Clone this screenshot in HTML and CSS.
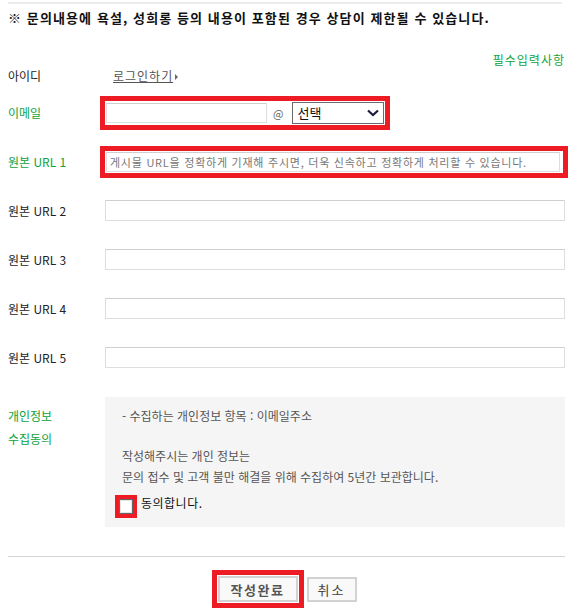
FILE: index.html
```html
<!DOCTYPE html>
<html lang="ko">
<head>
    <meta charset="UTF-8">
    <title>문의하기</title>
    <link rel="stylesheet" href="styles.css">
</head>
<body>
<div class="page">
    <div class="top-line"></div>
    <p class="notice">※ 문의내용에 욕설, 성희롱 등의 내용이 포함된 경우 상담이 제한될 수 있습니다.</p>
    <p class="required">필수입력사항</p>

    <div class="form-row row-id">
        <div class="label">아이디</div>
        <div class="field login-field"><a class="login-link" href="#">로그인하기</a><span class="arrow"></span></div>
    </div>

    <div class="form-row input-row">
        <div class="label req">이메일</div>
        <div class="field">
            <div class="highlight email-box">
                <input type="text" class="text-input email-id">
                <span class="at">@</span>
                <div class="select">
                    <span>선택</span>
                    <svg width="12" height="8" viewBox="0 0 12 8"><polyline points="1,1.5 6,6 11,1.5" fill="none" stroke="#1b1b3d" stroke-width="2.2"/></svg>
                </div>
            </div>
        </div>
    </div>

    <div class="form-row input-row">
        <div class="label req">원본 URL 1</div>
        <div class="field">
            <div class="highlight">
                <input type="text" class="text-input wide" placeholder="게시물 URL을 정확하게 기재해 주시면, 더욱 신속하고 정확하게 처리할 수 있습니다.">
            </div>
        </div>
    </div>

    <div class="form-row input-row">
        <div class="label">원본 URL 2</div>
        <div class="field"><input type="text" class="text-input plain"></div>
    </div>

    <div class="form-row input-row">
        <div class="label">원본 URL 3</div>
        <div class="field"><input type="text" class="text-input plain"></div>
    </div>

    <div class="form-row input-row">
        <div class="label">원본 URL 4</div>
        <div class="field"><input type="text" class="text-input plain"></div>
    </div>

    <div class="form-row input-row">
        <div class="label">원본 URL 5</div>
        <div class="field"><input type="text" class="text-input plain"></div>
    </div>

    <div class="form-row privacy-row">
        <div class="label req privacy-label">개인정보<br>수집동의</div>
        <div class="field">
            <div class="agree-box">
                <p>- 수집하는 개인정보 항목 : 이메일주소</p>
                <p class="gap">작성해주시는 개인 정보는</p>
                <p class="last">문의 접수 및 고객 불만 해결을 위해 수집하여 5년간 보관합니다.</p>
                <label class="check-line">
                    <span class="check-wrap"><input type="checkbox" class="check"></span>
                    <span class="agree-text">동의합니다.</span>
                </label>
            </div>
        </div>
    </div>

    <div class="divider"></div>

    <div class="btn-area">
        <span class="btn-highlight"><button type="button" class="btn btn-submit">작성완료</button></span>
        <button type="button" class="btn btn-cancel">취소</button>
    </div>
</div>
</body>
</html>
```

FILE: styles.css
```css
body {
    margin: 0;
    background: #fff;
    color: #222;
    font-family: "Noto Sans CJK KR", "Noto Sans", sans-serif;
    font-size: 12px;
}

.page {
    padding: 2px 2px 0 8px;
}

.top-line {
    height: 2px;
    margin-right: 6px;
    background: #ececec;
}

.notice {
    margin: 6px 0 0;
    font-size: 13px;
    font-weight: bold;
    line-height: 16px;
    color: #111;
    letter-spacing: 1.1px;
}

.required {
    margin: 27px 3px 0 0;
    text-align: right;
    line-height: 14px;
    color: #0ea33b;
    letter-spacing: 1px;
}

.form-row {
    display: flex;
    align-items: center;
}

.label {
    flex: none;
    width: 92px;
    color: #222;
}

.label.req {
    color: #0ea33b;
}

.field {
    flex: 1;
    min-width: 0;
}

.row-id {
    height: 17px;
    margin-bottom: 13px;
}

.login-field {
    display: flex;
    align-items: center;
    padding-left: 13px;
}

.login-link {
    color: #555;
    text-decoration: underline;
    letter-spacing: 1px;
}

.arrow {
    width: 0;
    height: 0;
    margin: 2px 0 0 2px;
    border-top: 3px solid transparent;
    border-bottom: 3px solid transparent;
    border-left: 3px solid #666;
}

.input-row {
    height: 31px;
    margin-bottom: 18px;
}

.highlight {
    display: flex;
    align-items: center;
    border: 5px solid #ed1c24;
    padding: 1px;
}

.text-input {
    box-sizing: border-box;
    height: 20px;
    margin: 0;
    padding: 0 3px;
    border: 1px solid #dedede;
    border-top-color: #cfcfcf;
    background: #fff;
    font-family: inherit;
    font-size: 11px;
    color: #333;
    letter-spacing: 0.75px;
}

.text-input::placeholder {
    color: #777;
}

.plain {
    display: block;
    width: calc(100% - 8px);
    height: 21px;
    margin: 0 3px 0 5px;
}

.wide {
    width: calc(100% - 2px);
}

.email-box {
    width: 290px;
    box-sizing: border-box;
}

.email-id {
    width: 162px;
}

.at {
    margin: 0 9px 0 6px;
    font-size: 11px;
    color: #666;
}

.select {
    box-sizing: border-box;
    display: flex;
    align-items: center;
    justify-content: space-between;
    width: 92px;
    height: 22px;
    padding: 0 4px;
    border: 1px solid #6a6a6a;
    color: #111;
    font-size: 13px;
}

/* sibling margins collapse, so this replaces the 18px below URL 5 */
.privacy-row {
    align-items: flex-start;
    margin-top: 24px;
}

.privacy-label {
    padding-top: 7px;
    line-height: 23px;
}

.agree-box {
    margin: 0 3px 0 5px;
    padding: 9px 17px 9px;
    background: #f5f5f5;
    line-height: 20px;
    color: #555;
}

.agree-box p {
    margin: 0;
}

.agree-box .gap {
    margin-top: 20px;
}

.agree-box .last {
    margin-top: 1px;
}

.check-line {
    display: flex;
    align-items: flex-start;
    margin: 8px 0 0 -7px;
}

.check-wrap {
    display: flex;
    padding: 4px;
    background: #ed1c24;
}

.check {
    appearance: none;
    -webkit-appearance: none;
    box-sizing: border-box;
    width: 14px;
    height: 15px;
    margin: 0;
    border: 1px solid #666;
    background: #fff;
    box-shadow: inset 0 0 0 1px #e4e4e4;
}

.agree-text {
    margin-left: 4px;
    line-height: 16px;
    color: #111;
    letter-spacing: 0.5px;
}

.divider {
    margin: 29px 3px 0 0;
    border-top: 1px solid #d4d4d4;
}

.btn-area {
    display: flex;
    align-items: center;
    justify-content: center;
    gap: 3px;
    margin-top: 13px;
    padding-right: 8px;
}

.btn-highlight {
    display: flex;
    padding: 1px;
    border: 5px solid #ed1c24;
}

.btn {
    box-sizing: border-box;
    height: 26px;
    margin: 0;
    border: 2px solid #d2d2d2;
    background: #f9f9f9;
    font-family: inherit;
    font-size: 13px;
    cursor: pointer;
}

.btn-submit {
    width: 80px;
    font-weight: bold;
    color: #555;
    letter-spacing: 1.5px;
}

.btn-cancel {
    width: 50px;
    height: 25px;
    color: #444;
    letter-spacing: 2px;
}
```
